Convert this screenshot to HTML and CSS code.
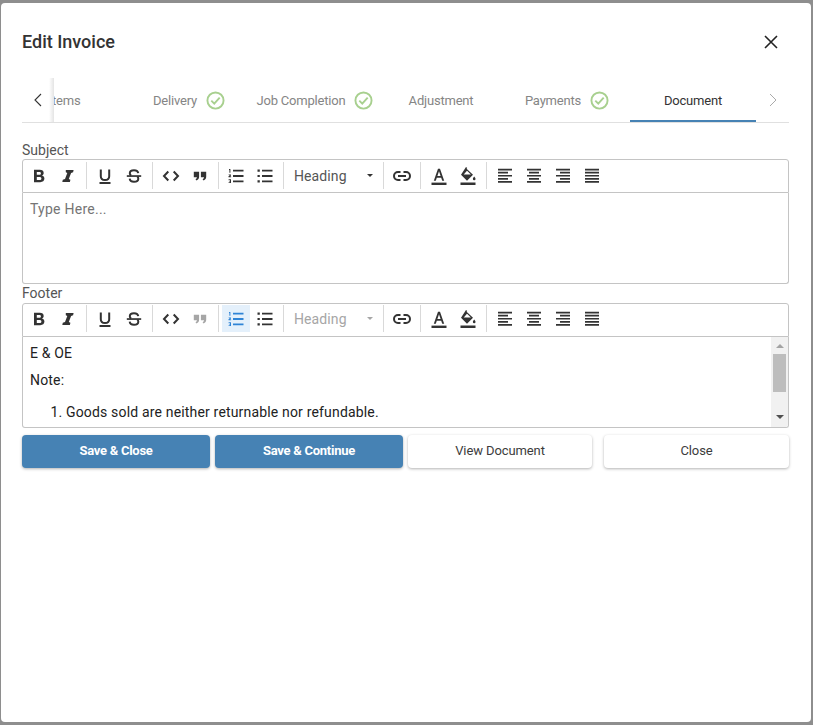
FILE: index.html
```html
<!DOCTYPE html>
<html lang="en">
<head>
<meta charset="utf-8">
<title>Edit Invoice</title>
<link rel="stylesheet" href="styles.css">
</head>
<body>
<svg class="defs" aria-hidden="true">
  <defs>
    <symbol id="check" viewBox="0 0 20 20"><circle cx="10" cy="10" r="8.5" fill="none" stroke="currentColor" stroke-width="2"/><path d="M5.600 10.200l3.100 3.100 5.700-6.300" fill="none" stroke="currentColor" stroke-width="2"/></symbol>
    <symbol id="i-b" viewBox="0 0 20 20"><path d="M5 3.800h5.800c2.400 0 3.900 1.200 3.900 3.100 0 1.200-.6 2.200-1.800 2.700 1.600.4 2.500 1.500 2.500 3 0 2.300-1.700 3.600-4.200 3.600H5zm2.800 2.200v2.800h2.500c1.100 0 1.600-.5 1.600-1.400S11.300 6 10.200 6zm0 4.900v3.100h2.700c1.200 0 1.900-.6 1.900-1.600s-.7-1.500-1.900-1.500z" fill="currentColor" fill-rule="evenodd"/></symbol>
    <symbol id="i-i" viewBox="0 0 20 20"><path d="M7.800 4h7.800l-.5 2.300-2 .6-2.300 6.200 1.600.6-.5 2.300H4.300l.5-2.300 2.200-.6 2.300-6.200-1.500-.6z" fill="currentColor"/></symbol>
    <symbol id="i-u" viewBox="0 0 20 20"><path d="M5.800 3.500v6.800c0 2.500 1.700 3.800 4.200 3.800s4.200-1.300 4.200-3.800V3.500" fill="none" stroke="currentColor" stroke-width="2"/><path d="M4.500 16h11v2h-11z" fill="currentColor"/></symbol>
    <symbol id="i-s" viewBox="0 0 20 20"><path d="M2.800 9.200h14.400v1.700H2.800z" fill="currentColor"/><path d="M14.200 7.200c-.2-1.900-2-2.900-4.200-2.900-2.500 0-4.200 1.200-4.200 3 0 1 .5 1.800 1.300 2.300M5.700 12.700c.2 2 2 3.100 4.300 3.100 2.500 0 4.300-1.200 4.300-3.100 0-.9-.4-1.600-1-2.100" fill="none" stroke="currentColor" stroke-width="2"/></symbol>
    <symbol id="i-code" viewBox="0 0 20 20"><path d="M7.300 5.500L3 10l4.300 4.500M12.700 5.500L17 10l-4.300 4.500" fill="none" stroke="currentColor" stroke-width="2"/></symbol>
    <symbol id="i-quote" viewBox="0 0 20 20"><path d="M3.800 5.800h5.300v5c0 1.700-.9 3-2.600 3.600l-1-1.200c.9-.5 1.400-1.100 1.400-2H3.800zM10.900 5.800h5.300v5c0 1.700-.9 3-2.600 3.600l-1-1.200c.9-.5 1.400-1.100 1.400-2h-3.100z" fill="currentColor"/></symbol>
    <symbol id="i-ol" viewBox="0 0 20 20"><path d="M7 3.700h10.500v1.800H7zM7 9.100h10.500v1.800H7zM7 14.500h10.500v1.800H7z" fill="currentColor"/><path d="M3 3h1.400v3.700h-1V4H3zM2.600 8.400h2.400v1l-1.100.9h1.200v.9H2.500v-1l1.300-1.100H2.600zM2.600 13.300H5v3.800H2.600v-.8h1.400v-.7h-.9v-.7H4v-.7H2.600z" fill="currentColor"/></symbol>
    <symbol id="i-ul" viewBox="0 0 20 20"><path d="M7 3.700h10.500v1.800H7zM7 9.100h10.500v1.800H7zM7 14.500h10.500v1.800H7zM2.500 3.500h2.300v2.200H2.500zM2.500 8.900h2.300v2.200H2.500zM2.500 14.300h2.300v2.200H2.500z" fill="currentColor"/></symbol>
    <symbol id="i-link" viewBox="0 0 20 20"><path d="M8.500 6H6a4 4 0 0 0 0 8h2.500M11.500 6H14a4 4 0 0 1 0 8h-2.500M6 10h8" fill="none" stroke="currentColor" stroke-width="2"/></symbol>
    <symbol id="i-color" viewBox="0 0 20 20"><path d="M9 2.800h2l4.200 12h-2l-1-3H7.800l-1 3h-2zm2.600 7.200L10 5.200 8.400 10z" fill="currentColor" fill-rule="evenodd"/><path d="M2.500 16.600h15V19h-15z" fill="currentColor"/></symbol>
    <symbol id="i-fill" viewBox="0 0 20 20"><path d="M8 1l1.200 1-.6.700 6.400 6-6 6-6-6zM9 4.800L5.700 8.500h7.200z" fill="currentColor" fill-rule="evenodd"/><path d="M16.200 10.500c.8 1 1.300 1.700 1.300 2.400a1.300 1.300 0 0 1-2.600 0c0-.7.500-1.400 1.300-2.400zM2.500 16.600h15V19h-15z" fill="currentColor"/></symbol>
    <symbol id="i-left" viewBox="0 0 20 20"><path d="M3 2.700h14v1.700H3zM3 5.800h10v1.700H3zM3 8.900h14v1.700H3zM3 12h10v1.700H3zM3 15.100h14v1.700H3z" fill="currentColor"/></symbol>
    <symbol id="i-center" viewBox="0 0 20 20"><path d="M3 2.700h14v1.700H3zM5 5.800h10v1.700H5zM3 8.900h14v1.700H3zM5 12h10v1.700H5zM3 15.100h14v1.700H3z" fill="currentColor"/></symbol>
    <symbol id="i-right" viewBox="0 0 20 20"><path d="M3 2.700h14v1.700H3zM7 5.800h10v1.700H7zM3 8.900h14v1.700H3zM7 12h10v1.700H7zM3 15.100h14v1.700H3z" fill="currentColor"/></symbol>
    <symbol id="i-just" viewBox="0 0 20 20"><path d="M3 2.700h14v1.700H3zM3 5.800h14v1.700H3zM3 8.900h14v1.700H3zM3 12h14v1.700H3zM3 15.100h14v1.700H3z" fill="currentColor"/></symbol>
  </defs>
</svg>
<main class="dialog">
  <header class="dialog-head">
    <h1 class="dialog-title">Edit Invoice</h1>
    <button class="close-btn" aria-label="Close">
      <svg width="14" height="14" viewBox="0 0 14 14"><path d="M1 1l12 12M13 1L1 13" fill="none" stroke="currentColor" stroke-width="1.600"/></svg>
    </button>
  </header>

  <nav class="tabs">
    <div class="tab-arrow tab-arrow-left">
      <svg width="10" height="14" viewBox="0 0 10 14"><path d="M8 1L2 7l6 6" fill="none" stroke="#333" stroke-width="1.100"/></svg>
    </div>
    <div class="tab-viewport">
      <div class="tab-strip">
        <div class="tab tab-first"><span>Items</span></div>
        <div class="tab"><span>Delivery</span><svg class="tab-check"><use href="#check"/></svg></div>
        <div class="tab"><span>Job Completion</span><svg class="tab-check"><use href="#check"/></svg></div>
        <div class="tab"><span>Adjustment</span></div>
        <div class="tab"><span>Payments</span><svg class="tab-check"><use href="#check"/></svg></div>
        <div class="tab tab-active"><span>Document</span></div>
      </div>
    </div>
    <div class="tab-arrow tab-arrow-right">
      <svg width="10" height="14" viewBox="0 0 10 14"><path d="M2 1l6 6-6 6" fill="none" stroke="#aaa" stroke-width="1"/></svg>
    </div>
  </nav>

  <label class="field-label field-first">Subject</label>
  <section class="editor">
    <div class="toolbar">
      <button class="tb"><svg><use href="#i-b"/></svg></button>
      <button class="tb"><svg><use href="#i-i"/></svg></button>
      <i class="sep"></i>
      <button class="tb"><svg><use href="#i-u"/></svg></button>
      <button class="tb"><svg><use href="#i-s"/></svg></button>
      <i class="sep"></i>
      <button class="tb"><svg><use href="#i-code"/></svg></button>
      <button class="tb"><svg><use href="#i-quote"/></svg></button>
      <i class="sep sep-tight"></i>
      <button class="tb"><svg><use href="#i-ol"/></svg></button>
      <button class="tb"><svg><use href="#i-ul"/></svg></button>
      <i class="sep"></i>
      <button class="dd"><span>Heading</span><b class="caret"></b></button>
      <i class="sep"></i>
      <button class="tb"><svg><use href="#i-link"/></svg></button>
      <i class="sep"></i>
      <button class="tb"><svg><use href="#i-color"/></svg></button>
      <button class="tb"><svg><use href="#i-fill"/></svg></button>
      <i class="sep"></i>
      <button class="tb"><svg><use href="#i-left"/></svg></button>
      <button class="tb"><svg><use href="#i-center"/></svg></button>
      <button class="tb"><svg><use href="#i-right"/></svg></button>
      <button class="tb"><svg><use href="#i-just"/></svg></button>
    </div>
    <div class="editor-body editor-subject"><p class="placeholder">Type Here...</p></div>
  </section>

  <label class="field-label">Footer</label>
  <section class="editor">
    <div class="toolbar toolbar-footer">
      <button class="tb"><svg><use href="#i-b"/></svg></button>
      <button class="tb"><svg><use href="#i-i"/></svg></button>
      <i class="sep"></i>
      <button class="tb"><svg><use href="#i-u"/></svg></button>
      <button class="tb"><svg><use href="#i-s"/></svg></button>
      <i class="sep"></i>
      <button class="tb"><svg><use href="#i-code"/></svg></button>
      <button class="tb tb-off"><svg><use href="#i-quote"/></svg></button>
      <i class="sep sep-tight"></i>
      <button class="tb tb-on"><svg><use href="#i-ol"/></svg></button>
      <button class="tb"><svg><use href="#i-ul"/></svg></button>
      <i class="sep"></i>
      <button class="dd dd-off"><span>Heading</span><b class="caret"></b></button>
      <i class="sep"></i>
      <button class="tb"><svg><use href="#i-link"/></svg></button>
      <i class="sep"></i>
      <button class="tb"><svg><use href="#i-color"/></svg></button>
      <button class="tb"><svg><use href="#i-fill"/></svg></button>
      <i class="sep"></i>
      <button class="tb"><svg><use href="#i-left"/></svg></button>
      <button class="tb"><svg><use href="#i-center"/></svg></button>
      <button class="tb"><svg><use href="#i-right"/></svg></button>
      <button class="tb"><svg><use href="#i-just"/></svg></button>
    </div>
    <div class="editor-body editor-footer">
      <div class="doc">
        <p class="doc-line">E &amp; OE</p>
        <p class="doc-line">Note:</p>
        <ol class="doc-list"><li>Goods sold are neither returnable nor refundable.</li></ol>
      </div>
      <div class="scrollbar">
        <b class="sb-up"></b>
        <b class="sb-thumb"></b>
        <b class="sb-down"></b>
      </div>
    </div>
  </section>

  <footer class="actions">
    <button class="btn btn-primary btn-save">Save &amp; Close</button>
    <button class="btn btn-primary btn-save">Save &amp; Continue</button>
    <button class="btn btn-plain btn-view">View Document</button>
    <button class="btn btn-plain btn-close">Close</button>
  </footer>
</main>
</body>
</html>
```
FILE: styles.css
```css
* { box-sizing: border-box; }
html, body { height: 100%; }
body {
  margin: 0;
  padding: 3px 2px 3px 1px;
  background: #8e8e8e;
  font-family: Roboto, "Liberation Sans", sans-serif;
  color: #212121;
  overflow: hidden;
}
button { font-family: inherit; border: 0; background: none; padding: 0; }
.defs { display: none; }

.dialog {
  height: 719px;
  padding: 22px 22px 0 21px;
  background: #fff;
  border-radius: 4px;
}
.dialog-head {
  display: flex;
  align-items: center;
  justify-content: space-between;
  height: 34px;
  margin-bottom: 19px;
}
.dialog-title { margin: -2px 0 0; font-size: 18px; font-weight: 500; color: #333; }
.close-btn { display: flex; margin-right: 11px; color: #222; }

.tabs {
  display: flex;
  height: 45px;
  border-bottom: 1px solid #e0e0e0;
}
.tab-arrow {
  display: flex;
  align-items: center;
  justify-content: center;
  height: 44px;
}
.tab-arrow-right { flex: 0 0 33px; }
.tab-arrow-left {
  flex: 0 0 32px;
  position: relative;
  z-index: 1;
  background: linear-gradient(to right, #fff 0, #fff 27px, #e4e4e4 32px);
  padding-right: 1px;
}
.tab-viewport { flex: 1; overflow: hidden; }
.tab-strip { display: flex; margin-left: -54px; width: 756px; }
.tab {
  flex: 0 0 126px;
  display: flex;
  align-items: center;
  justify-content: center;
  gap: 9px;
  height: 44px;
  font-size: 13px;
  letter-spacing: -0.2px;
  color: #858585;
}
.tab-first { padding-left: 3px; }
.tab-active { color: #333; box-shadow: inset 0 -2px 0 #4682b4; }
.tab-check { width: 19px; height: 19px; color: #a8d08f; }

.field-label {
  display: block;
  height: 19px;
  font-size: 14px;
  line-height: 18px;
  color: #555;
}
.field-first { height: 18px; margin-top: 18px; }

.editor { display: block; }
.toolbar {
  display: flex;
  align-items: center;
  height: 34px;
  padding: 0 2px 1px;
  border: 1px solid #c4c4c4;
  border-radius: 3px 3px 0 0;
  color: #333;
}
.toolbar-footer { padding-bottom: 3px; }
.tb {
  flex: 0 0 28px;
  display: flex;
  align-items: center;
  justify-content: center;
  height: 27px;
  margin-right: 1px;
  color: #333;
}
.tb svg { width: 20px; height: 20px; }
.tb-off { color: #a6a6a6; }
.tb-on { background: #e4f0fb; color: #2f84d6; }
.sep {
  flex: 0 0 1px;
  height: 27px;
  margin: 0 4px 0 3px;
  background: #d9d9d9;
}
.sep-tight { margin-right: 3px; }
.dd {
  flex: 0 0 91px;
  display: flex;
  align-items: center;
  justify-content: space-between;
  height: 27px;
  margin-right: 1px;
  padding: 0 6px;
  font-size: 14px;
  letter-spacing: 0.1px;
  color: #555;
}
.dd-off { color: #a6a6a6; }
.caret {
  width: 0;
  height: 0;
  border: 3px solid transparent;
  border-top: 3px solid #333;
  border-bottom: 0;
}
.dd-off .caret { border-top-color: #a6a6a6; }

.editor-body {
  height: 91px;
  border: 1px solid #c4c4c4;
  border-top: 0;
  border-radius: 0 0 3px 3px;
  background: #fff;
  overflow: hidden;
}
.editor-subject { padding: 6px 7px; }
.editor-footer { display: flex; padding-left: 7px; }
.placeholder { margin: 0; font-size: 14px; line-height: 20px; letter-spacing: 0.25px; color: #757575; }

.doc { flex: 1; font-size: 14px; letter-spacing: 0.17px; color: #222; overflow: hidden; }
.doc-line { margin: 6px 0 0; height: 20px; line-height: 20px; }
.doc-list { margin: 12px 0 0; padding-left: 36px; line-height: 20px; }
.doc-line + .doc-line { margin-top: 7px; }
.scrollbar {
  flex: 0 0 17px;
  display: flex;
  flex-direction: column;
  align-items: center;
  background: #f1f1f1;
}
.sb-up, .sb-down { width: 0; height: 0; flex: 0 0 4px; }
.sb-up { border: 4px solid transparent; border-bottom: 4px solid #a3a3a3; border-top: 0; margin: 7px 0 6px; }
.sb-thumb { width: 13px; height: 38px; background: #bdbdbd; }
.sb-down { border: 4px solid transparent; border-top: 4px solid #505050; border-bottom: 0; margin-top: auto; margin-bottom: 8px; }

.actions { display: flex; margin-top: 7px; }
.btn {
  height: 33px;
  padding-bottom: 2px;
  border-radius: 4px;
  font-size: 13px;
  box-shadow: 0 1px 3px rgba(0, 0, 0, .3);
}
.btn-primary { background: #4682b4; color: #fff; font-weight: 700; letter-spacing: -0.27px; }
.btn-plain { background: #fff; color: #3c3c3c; font-weight: 400; letter-spacing: -0.1px; }
.btn-save { flex: 0 0 188px; margin-right: 5px; }
.btn-view { flex: 0 0 184px; margin-right: 12px; }
.btn-close { flex: 1; }
```
